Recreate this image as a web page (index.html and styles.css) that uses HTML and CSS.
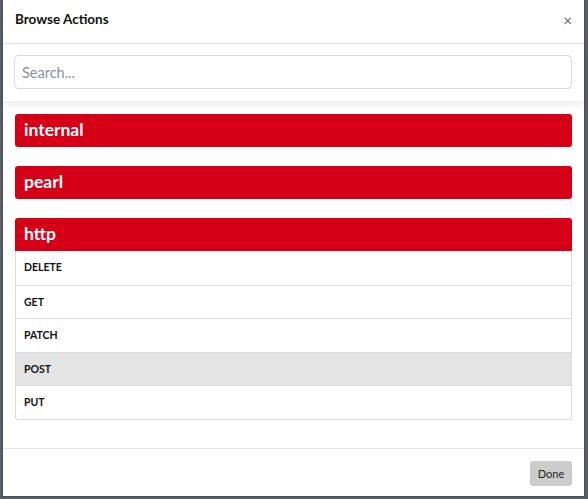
FILE: index.html
```html
<!DOCTYPE html>
<html>
<head>
<meta charset="utf-8">
<link rel="stylesheet" href="styles.css">
</head>
<body>
<div class="backdrop">
  <div class="modal">
    <div class="modal-header">
      <h1 class="title">Browse Actions</h1>
      <span class="close">&times;</span>
    </div>
    <div class="search-bar">
      <input class="search" type="text" placeholder="Search...">
    </div>
    <div class="modal-body">
      <div class="group">
        <div class="group-head">internal</div>
      </div>
      <div class="group">
        <div class="group-head">pearl</div>
      </div>
      <div class="group open">
        <div class="group-head">http</div>
        <ul class="items">
          <li class="item">DELETE</li>
          <li class="item">GET</li>
          <li class="item">PATCH</li>
          <li class="item active">POST</li>
          <li class="item">PUT</li>
        </ul>
      </div>
    </div>
    <div class="modal-footer">
      <button class="btn">Done</button>
    </div>
  </div>
</div>
</body>
</html>
```

FILE: styles.css
```css
* { box-sizing: border-box; }
html, body { margin: 0; padding: 0; height: 100%; }
body {
  font-family: "Lato", "Noto Sans", "Liberation Sans", sans-serif;
  background: #5a5e66;
  color: #111;
}
.backdrop {
  height: 499px;
  padding: 0 4px 3px 3px;
  display: flex;
}
.modal {
  flex: 1;
  background: #fff;
  display: flex;
  flex-direction: column;
  box-shadow: 0 0 0 1px rgba(0,0,0,0.15);
}
.modal-header {
  height: 44px;
  display: flex;
  align-items: center;
  justify-content: space-between;
  padding: 0 12px 0 12px;
  border-bottom: 1px solid #e3e3e3;
  flex: none;
}
.title {
  margin: 0;
  font-size: 13.5px;
  font-weight: 700;
  color: #111;
  position: relative;
  top: -3px;
}
.close {
  font-size: 15px;
  color: #666;
  position: relative;
  top: -2px;
}
.search-bar {
  flex: none;
  padding: 11px 12px 12px 11px;
  background: #fff;
  position: relative;
  z-index: 2;
  box-shadow: 0 4px 8px rgba(0,0,0,0.08);
}
.search {
  display: block;
  width: 100%;
  height: 34px;
  border: 1px solid #d9d9d9;
  border-radius: 4px;
  padding: 0 7px;
  font-family: inherit;
  font-size: 14.5px;
  color: #333;
  outline: none;
}
.search::placeholder { color: #8a8f98; }
.modal-body {
  flex: 1;
  overflow: hidden;
  padding: 13px 12px 0 12px;
  display: flex;
  flex-direction: column;
  gap: 19px;
}
.group-head {
  background: #d50017;
  color: #fff;
  font-weight: 700;
  font-size: 17.5px;
  height: 33px;
  line-height: 32px;
  padding: 0 9px;
  border-radius: 3px;
}
.group.open .group-head {
  border-radius: 3px 3px 0 0;
}
.items {
  list-style: none;
  margin: 0;
  padding: 0;
  border: 1px solid #dcdcdc;
  border-top: none;
  border-radius: 0 0 3px 3px;
}
.item {
  height: 33.5px;
  line-height: 33px;
  padding: 0 8px;
  font-size: 10.5px;
  font-weight: 700;
  color: #111;
  border-top: 1px solid #dcdcdc;
}
.item:first-child { border-top: none; }
.item.active { background: #e4e4e4; }
.modal-footer {
  flex: none;
  height: 48px;
  border-top: 1px solid #e3e3e3;
  display: flex;
  align-items: center;
  justify-content: flex-end;
  padding: 0 12px;
}
.btn {
  height: 25px;
  width: 42px;
  border: none;
  border-radius: 3px;
  background: #cccccc;
  font-family: inherit;
  font-size: 11px;
  color: #222;
  padding: 0;
  margin-top: 2px;
}
```
